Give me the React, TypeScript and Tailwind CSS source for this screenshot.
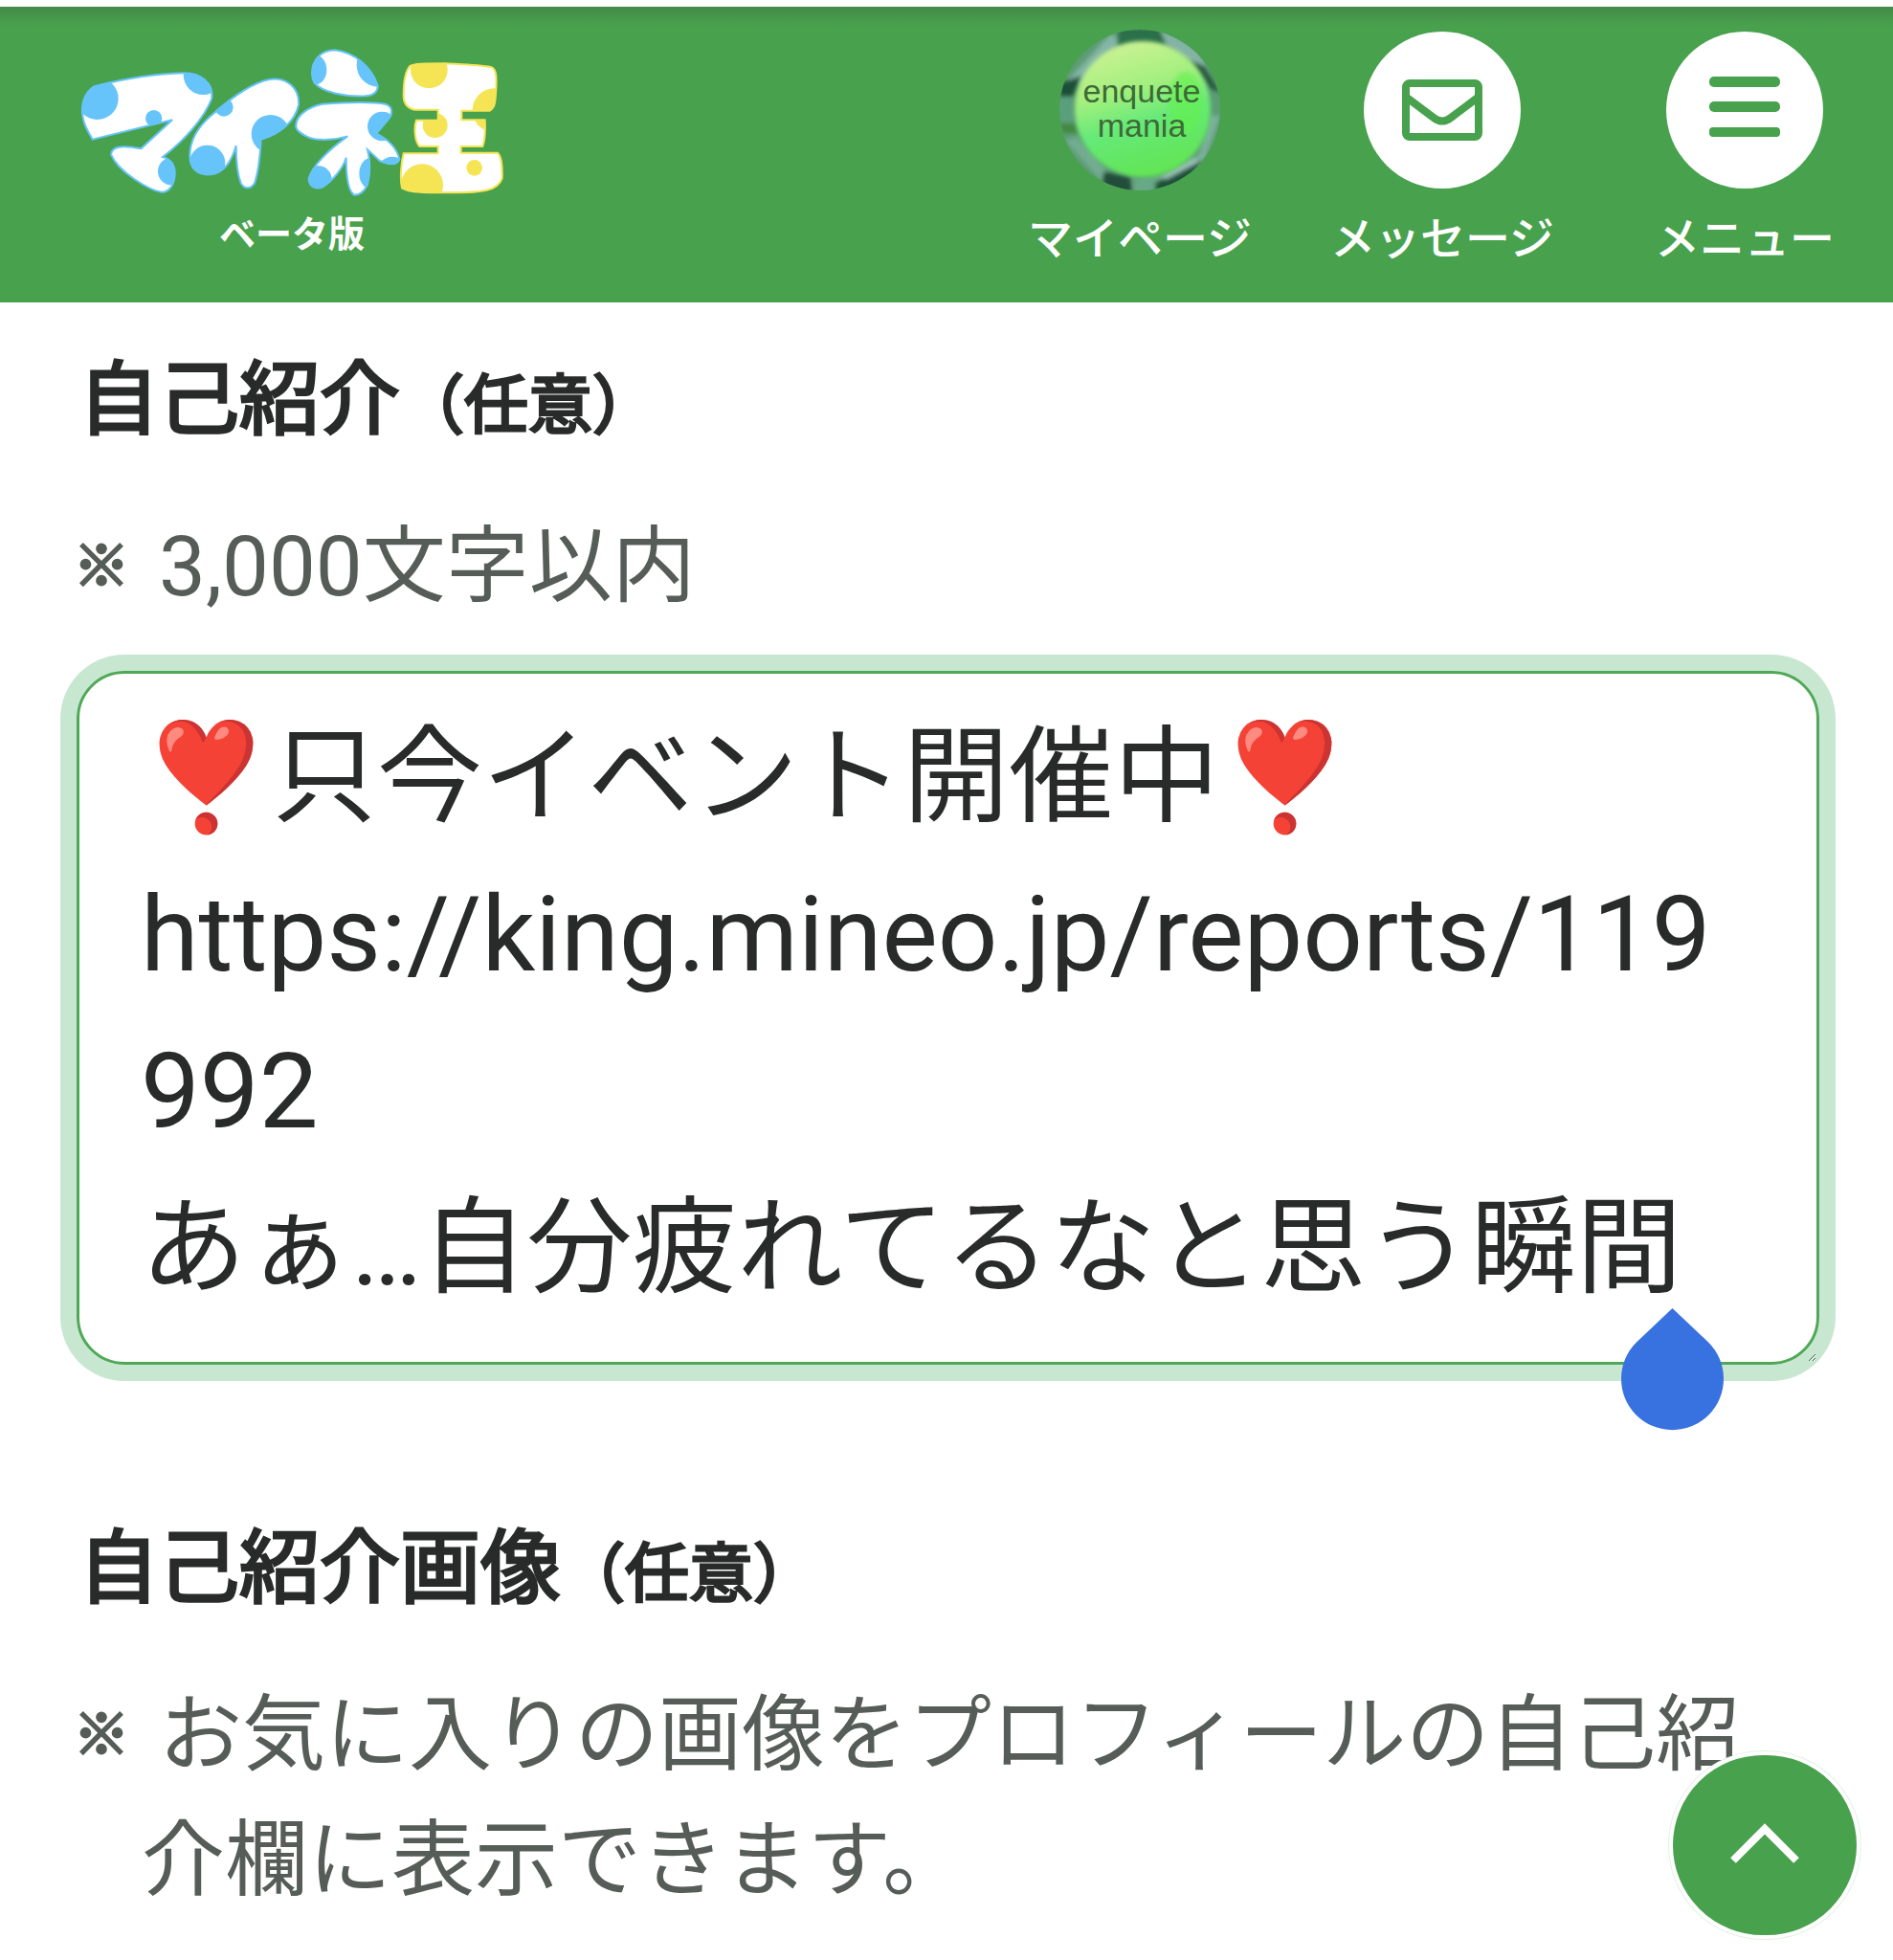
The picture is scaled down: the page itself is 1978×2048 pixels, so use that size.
import React, { useState } from 'react';

const INITIAL_TEXT = `❣️只今イベント開催中❣️
https://king.mineo.jp/reports/119992
あぁ…自分疲れてるなと思う瞬間`;

function Logo() {
  return (
    <svg className="h-[160px] w-[450px]" viewBox="60 145 1350 480" role="img" aria-label="マイネ王">
      <defs>
        <clipPath id="logo-ma">
          <path id="ma" d="M80 370C72 330 85 290 115 272C200 250 300 232 395 230C450 230 490 260 484 310C460 370 400 440 330 493C355 500 370 515 368 550C366 580 350 605 325 603C290 598 190 540 168 485C170 460 200 455 262 467L360 377L110 438C100 420 85 400 80 370Z" />
        </clipPath>
        <clipPath id="logo-i">
          <path id="i" d="M415 490C415 440 440 400 480 365C530 320 600 262 665 250C720 240 760 280 756 330C745 380 700 420 638 438C636 480 630 540 618 575C605 595 585 595 575 575C562 540 560 500 560 458C545 510 520 545 480 548C440 550 415 530 415 490Z" />
        </clipPath>
        <clipPath id="logo-ne">
          <path id="ne" d="M798 230C798 190 825 158 870 158C930 165 985 210 1004 270C1004 290 990 300 965 302C900 305 830 290 805 260C799 250 798 240 798 230ZM748 390C752 360 790 335 830 327C900 322 980 318 1030 328C1050 335 1052 355 1040 372L1000 420C1040 440 1065 470 1072 500C1065 520 1040 518 1010 505L972 470C980 500 982 545 972 580C960 605 945 613 930 612C912 600 905 560 905 495C895 530 860 570 830 588C805 595 788 585 788 560C800 520 850 470 910 428C870 440 810 445 780 428C755 415 745 405 748 390Z" />
        </clipPath>
        <clipPath id="logo-ou">
          <path id="ou" d="M1085 300C1085 260 1090 225 1105 208C1115 200 1150 200 1220 200C1290 203 1340 205 1362 212C1376 220 1377 240 1375 280C1373 320 1372 340 1355 348L1267 348V377H1340C1342 410 1340 440 1333 460H1265V480H1380C1392 490 1395 530 1394 560C1380 600 1330 605 1240 605C1160 605 1100 605 1080 590C1073 560 1078 510 1085 482H1193V460H1135C1120 445 1117 400 1125 378H1193V345H1120C1095 340 1085 325 1085 300Z" />
        </clipPath>
      </defs>
      <g fill="#fff">
        <use href="#ma" />
        <use href="#i" />
        <use href="#ne" />
        <use href="#ou" />
      </g>
      <g fill="#66c4fa">
        <g clipPath="url(#logo-ma)">
          <circle cx="125" cy="310" r="66" />
          <circle cx="457" cy="236" r="62" />
          <circle cx="302" cy="372" r="26" />
          <circle cx="358" cy="538" r="43" />
        </g>
        <g clipPath="url(#logo-i)">
          <circle cx="522" cy="337" r="29" />
          <circle cx="668" cy="421" r="60" />
          <circle cx="470" cy="512" r="56" />
        </g>
        <g clipPath="url(#logo-ne)">
          <ellipse cx="810" cy="220" rx="34" ry="46" />
          <circle cx="1006" cy="205" r="68" />
          <circle cx="1018" cy="397" r="46" />
          <circle cx="818" cy="563" r="42" />
          <ellipse cx="984" cy="545" rx="38" ry="50" />
          <circle cx="1050" cy="540" r="48" />
        </g>
      </g>
      <g fill="#f5e454" clipPath="url(#logo-ou)">
        <circle cx="1165" cy="220" r="58" />
        <circle cx="1370" cy="347" r="69" />
        <circle cx="1184" cy="394" r="39" />
        <circle cx="1334" cy="377" r="22" />
        <circle cx="1143" cy="581" r="66" />
        <circle cx="1307" cy="527" r="25" />
      </g>
      <g fill="none" stroke="#66c4fa" strokeWidth="6">
        <use href="#ma" />
        <use href="#i" />
        <use href="#ne" />
      </g>
      <use href="#ou" fill="none" stroke="#f5e454" strokeWidth="6" />
    </svg>
  );
}

function Avatar() {
  return (
    <svg className="size-[168px]" viewBox="0 0 168 168" role="img" aria-label="enquete mania">
      <defs>
        <clipPath id="avatar-clip">
          <circle cx="84" cy="84" r="84" />
        </clipPath>
        <linearGradient id="avatar-face" x1="0.3" y1="0" x2="0.6" y2="1">
          <stop offset="0" stopColor="#cdf294" />
          <stop offset="0.35" stopColor="#a3f07e" />
          <stop offset="0.6" stopColor="#66e978" />
          <stop offset="1" stopColor="#62e552" />
        </linearGradient>
        <filter id="avatar-soft">
          <feGaussianBlur stdDeviation="2" />
        </filter>
      </defs>
      <g clipPath="url(#avatar-clip)">
        <rect width="168" height="168" fill="#5c9c74" />
        <g filter="url(#avatar-soft)">
          <path d="M4 58L54 4L66 16L26 56Z" fill="#83b5a6" />
          <path d="M62 -2H104L112 16L60 18Z" fill="#2c7049" />
          <path d="M104 -4L146 22L160 52L138 36L112 16Z" fill="#84b3a5" />
          <path d="M136 32L152 38L168 66L158 62Z" fill="#275a3e" />
          <path d="M0 56L24 48L14 70H0Z" fill="#1f4f38" />
          <path d="M0 70H14L16 96H2Z" fill="#5a9f7d" />
          <path d="M0 98H16L20 108H4Z" fill="#43873f" />
          <path d="M6 116L18 112L52 150L46 160Z" fill="#73ac91" />
          <path d="M168 90H158L146 130L128 146L150 140Z" fill="#7bb09c" />
          <path d="M46 148L74 154L76 170H44Z" fill="#224d3b" />
          <path d="M78 156L106 152L100 170H78Z" fill="#68a887" />
          <path d="M100 160L150 136L136 162L100 170Z" fill="#1f5139" />
          <path d="M104 154L140 134L146 138L112 156Z" fill="#9cc3bb" />
        </g>
        <circle cx="87" cy="83" r="71" fill="url(#avatar-face)" filter="url(#avatar-soft)" />
        <ellipse cx="132" cy="76" rx="18" ry="32" fill="#64f04d" opacity="0.6" filter="url(#avatar-soft)" />
      </g>
      <g fill="#3d6a37" fontFamily="'Liberation Sans', Arial, sans-serif" fontSize="34" textAnchor="middle">
        <text x="86" y="76">enquete</text>
        <text x="86" y="112">mania</text>
      </g>
    </svg>
  );
}

function MailIcon() {
  return (
    <svg className="h-[64px] w-[84px]" viewBox="0 0 84 64" fill="none" stroke="#48a14d" strokeWidth="8">
      <rect x="4" y="4" width="76" height="56" rx="4" />
      <path d="M5 19L33 40Q42 47 51 40L79 19" />
    </svg>
  );
}

function MenuIcon() {
  return (
    <svg className="h-[70px] w-[74px]" viewBox="0 0 74 70" fill="#48a14d">
      <rect y="0" width="74" height="11" rx="5" />
      <rect y="26" width="74" height="11" rx="5" />
      <rect y="53" width="74" height="10" rx="4" />
    </svg>
  );
}

function NavItem({ label, children }: { label: string; children: React.ReactNode }) {
  return (
    <a href="#" className="flex w-[236px] flex-col items-center">
      <span className="flex h-[168px] items-center">{children}</span>
      <span className="mt-4 text-[47px] leading-[70px] font-medium text-white">{label}</span>
    </a>
  );
}

function Disc({ children }: { children: React.ReactNode }) {
  return (
    <span className="flex size-[164px] items-center justify-center rounded-full bg-white">{children}</span>
  );
}

function Header() {
  return (
    <header className="mt-[7px] flex h-[309px] items-start justify-between bg-[#48a14d] bg-linear-to-b from-[#438a48] to-[#48a14d] to-[20px] pr-[37px] pl-20">
      <a href="#" className="flex flex-col items-center pt-[41px]">
        <Logo />
        <span className="text-[38px] leading-[74px] font-bold text-white">ベータ版</span>
      </a>
      <nav className="flex gap-20 pt-6">
        <NavItem label="マイページ">
          <Avatar />
        </NavItem>
        <NavItem label="メッセージ">
          <Disc>
            <MailIcon />
          </Disc>
        </NavItem>
        <NavItem label="メニュー">
          <Disc>
            <MenuIcon />
          </Disc>
        </NavItem>
      </nav>
    </header>
  );
}

function Optional() {
  return <span className="text-[67px]">（任意）</span>;
}

function Note({ children }: { children: React.ReactNode }) {
  return (
    <p className="flex gap-4 text-[87px] leading-[131px] text-[#565d58]">
      <span className="flex w-[52px] shrink-0 justify-center text-[58px] [-webkit-text-stroke:3px_#565d58]">※</span>
      <span className="indent-[18px]">{children}</span>
    </p>
  );
}

export default function App() {
  const [text, setText] = useState(INITIAL_TEXT);

  return (
    <div className="overflow-hidden bg-white font-[Roboto,'Noto_Sans_CJK_JP',sans-serif] text-[#292b2a]" lang="ja">
      <Header />

      <main className="pr-[77px] pl-20">
        <section className="pt-10">
          <h2 className="pl-0.5 text-[84px] leading-[126px] [-webkit-text-stroke:3px_#292b2a]">
            <label htmlFor="introduction">
              自己紹介
              <Optional />
            </label>
          </h2>
          <div className="mt-10">
            <Note>3,000文字以内</Note>
          </div>
          <div className="relative mt-[43px]">
            <textarea
              id="introduction"
              rows={4}
              value={text}
              onChange={e => setText(e.target.value)}
              className="block w-full resize overflow-hidden rounded-[50px] border-3 border-[#4fa857] px-16 pt-[27px] pb-9 text-[110px] leading-[164px] break-all ring-[17px] ring-[#c8e7d1] outline-none"
            />
            <svg className="absolute right-[100px] -bottom-[69px] h-[128px] w-[107px]" viewBox="0 0 107 128" fill="#3871e0">
              <path d="M53.500 0L91 35.500A53.500 53.500 0 1 1 16 35.500Z" />
            </svg>
          </div>
        </section>

        <section className="pt-[151px]">
          <h2 className="pl-0.5 text-[84px] leading-[126px] [-webkit-text-stroke:3px_#292b2a]">
            自己紹介画像
            <Optional />
          </h2>
          <div className="mt-10">
            <Note>お気に入りの画像をプロフィールの自己紹介欄に表示できます。</Note>
          </div>
        </section>
      </main>

      <button
        type="button"
        aria-label="ページの先頭へ"
        className="fixed right-[34px] bottom-[22px] flex h-[196px] w-[200px] items-center justify-center rounded-full border-4 border-white bg-[#48a14d] pb-1 ring-1 ring-[#e2f2e4]"
      >
        <svg className="h-[42px] w-[72px]" viewBox="0 0 72 42" fill="none" stroke="#fff" strokeWidth="8">
          <path d="M3 39L36 6L69 39" />
        </svg>
      </button>
    </div>
  );
}
